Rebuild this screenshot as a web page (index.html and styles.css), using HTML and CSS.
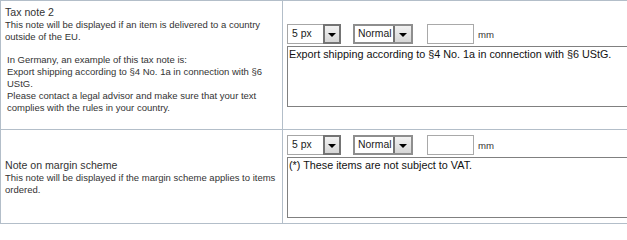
FILE: index.html
```html
<!DOCTYPE html>
<html lang="en">
<head>
<meta charset="utf-8">
<title>Tax notes</title>
<link rel="stylesheet" href="styles.css">
</head>
<body>
<table class="settings">
  <tr>
    <td class="label-cell">
      <div class="title">Tax note 2</div>
      <div class="desc">This note will be displayed if an item is delivered to a country outside of the EU.</div>
      <div class="example">In Germany, an example of this tax note is:<br>Export shipping according to §4 No. 1a in connection with §6 UStG.<br>Please contact a legal advisor and make sure that your text complies with the rules in your country.</div>
    </td>
    <td class="field-cell">
      <div class="controls">
        <div class="sel sel-size"><span class="val">5 px</span><span class="btn"><span class="tri"></span></span></div>
        <div class="sel sel-weight"><span class="val">Normal</span><span class="btn"><span class="tri"></span></span></div>
        <input class="mm-input" type="text" value="">
        <span class="unit">mm</span>
      </div>
      <textarea class="note">Export shipping according to §4 No. 1a in connection with §6 UStG.</textarea>
    </td>
  </tr>
  <tr>
    <td class="label-cell">
      <div class="title">Note on margin scheme</div>
      <div class="desc">This note will be displayed if the margin scheme applies to items ordered.</div>
    </td>
    <td class="field-cell second">
      <div class="controls">
        <div class="sel sel-size"><span class="val">5 px</span><span class="btn"><span class="tri"></span></span></div>
        <div class="sel sel-weight"><span class="val">Normal</span><span class="btn"><span class="tri"></span></span></div>
        <input class="mm-input" type="text" value="">
        <span class="unit">mm</span>
      </div>
      <textarea class="note">(*) These items are not subject to VAT.</textarea>
    </td>
  </tr>
</table>
</body>
</html>
```

FILE: styles.css
```css
html, body {
  margin: 0;
  padding: 0;
  background: #ffffff;
  overflow: hidden;
}

body {
  font-family: "Liberation Sans", Arial, sans-serif;
  color: #333333;
}

.settings {
  border-collapse: separate;
  border-spacing: 0;
  border-top: 1px solid #b3bec9;
  border-left: 1px solid #b3bec9;
  width: 720px;
}

.settings td {
  vertical-align: middle;
  border-bottom: 1px solid #b3bec9;
}

.label-cell {
  width: 276px;
  padding: 4px 1px 4px 4px;
  border-right: 1px solid #b3bec9;
}

.title {
  font-size: 10.6px;
  line-height: 14px;
  color: #333333;
}

.desc {
  font-size: 9.5px;
  line-height: 11.5px;
  color: #333333;
}

.example {
  font-size: 9.5px;
  line-height: 12px;
  color: #333333;
  padding-left: 2px;
  margin-top: 12px;
  padding-bottom: 11px;
}

.field-cell {
  padding: 5px 4px;
}

.controls {
  display: flex;
  align-items: center;
  height: 20px;
  margin-bottom: 2px;
}

.sel {
  display: flex;
  box-sizing: border-box;
  height: 20px;
  background: #ffffff;
  border: 1px solid #a6a6a6;
  font-size: 10.4px;
  color: #1a1a1a;
}

.sel-size {
  width: 54px;
}

.sel-weight {
  width: 60px;
  margin-left: 12px;
  border: 2px solid #8e8e8e;
}

.val {
  flex: 1;
  line-height: 17px;
  padding-left: 4px;
}

.sel-weight .val {
  line-height: 15px;
  padding-left: 3px;
}

.btn {
  box-sizing: border-box;
  width: 18px;
  margin: -1px -1px -1px 0;
  border: 2px solid #747474;
  background: linear-gradient(#f2f2f2, #d6d6d6);
  display: flex;
  align-items: center;
  justify-content: center;
  padding-top: 2px;
}

.sel-weight .btn {
  margin: 0;
  border-width: 0 0 0 2px;
  width: 18px;
}

.tri {
  width: 0;
  height: 0;
  border-left: 4px solid transparent;
  border-right: 4px solid transparent;
  border-top: 4px solid #000000;
}

.mm-input {
  box-sizing: border-box;
  width: 47px;
  height: 20px;
  margin: 0 0 0 14px;
  padding: 0 2px;
  border: 1px solid #a9a9a9;
  background: #ffffff;
  font-family: "Liberation Sans", Arial, sans-serif;
  font-size: 10.4px;
}

.unit {
  margin-left: 4px;
  font-size: 9.6px;
  color: #333333;
  padding-top: 1px;
}

.note {
  display: block;
  box-sizing: border-box;
  width: 400px;
  height: 61px;
  margin: 0;
  padding: 1px 1px;
  border: 1px solid #808080;
  resize: none;
  overflow: hidden;
  font-family: "Liberation Sans", Arial, sans-serif;
  font-size: 10.8px;
  line-height: 12px;
  color: #111111;
  background: #ffffff;
}
```
